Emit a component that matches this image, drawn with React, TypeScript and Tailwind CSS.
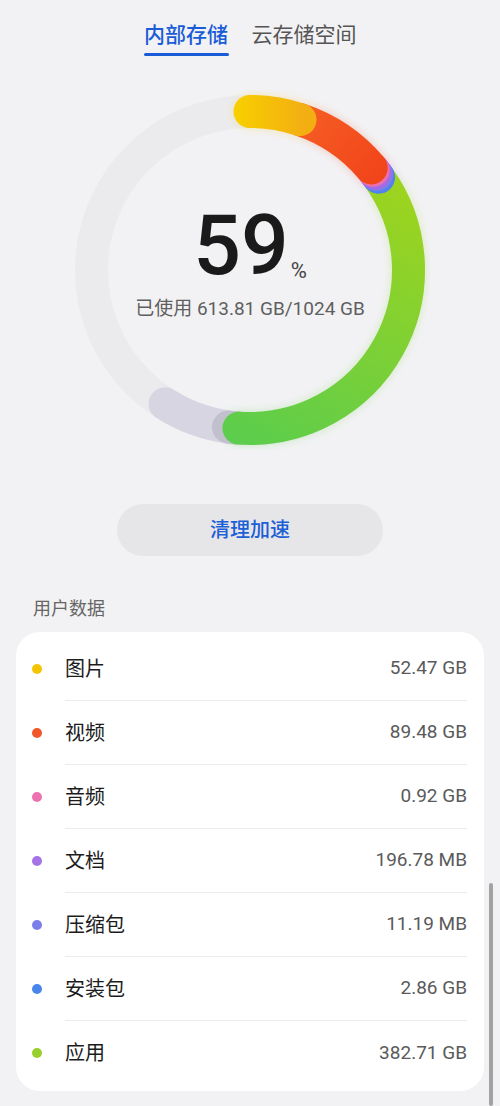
import React from 'react';

const CX = 180;
const CY = 180;
const R = 158.5;
const SW = 33;

// point on the ring, angle measured clockwise from 12 o'clock
const pt = (deg: number) => {
  const a = (deg * Math.PI) / 180;
  return [CX + R * Math.sin(a), CY - R * Math.cos(a)];
};

const arc = (from: number, to: number) => {
  const [x1, y1] = pt(from);
  const [x2, y2] = pt(to);
  const large = to - from > 180 ? 1 : 0;
  return `M ${x1.toFixed(2)} ${y1.toFixed(2)} A ${R} ${R} 0 ${large} 1 ${x2.toFixed(2)} ${y2.toFixed(2)}`;
};

// drawn bottom to top: later ones sit over the caps of earlier ones
const segments = [
  { from: 187.8, to: 212.4, stroke: '#d6d5e1', glow: false },
  { from: 184, to: 187.8, stroke: '#c1c0cd', glow: false },
  { from: 54.2, to: 184, stroke: 'url(#gGreen)', glow: true },
  { from: 53, to: 54.2, stroke: '#4f82ec', glow: true },
  { from: 52.2, to: 53, stroke: '#7b7de9', glow: true },
  { from: 51, to: 52.2, stroke: '#a46ae6', glow: true },
  { from: 49.9, to: 51, stroke: '#ec6fae', glow: true },
  { from: 18.4, to: 49.9, stroke: 'url(#gOrange)', glow: true },
  { from: 0, to: 18.4, stroke: 'url(#gYellow)', glow: true },
];

const rows = [
  { name: '图片', size: '52.47 GB', color: '#f5c400' },
  { name: '视频', size: '89.48 GB', color: '#f0582c' },
  { name: '音频', size: '0.92 GB', color: '#ee72b0' },
  { name: '文档', size: '196.78 MB', color: '#a673e6' },
  { name: '压缩包', size: '11.19 MB', color: '#7c7fe9' },
  { name: '安装包', size: '2.86 GB', color: '#4a86ea' },
  { name: '应用', size: '382.71 GB', color: '#98cf2c' },
];

const Donut: React.FC = () => (
  <svg width="360" height="360" viewBox="0 0 360 360">
    <defs>
      <linearGradient id="gYellow" gradientUnits="userSpaceOnUse" x1="165" y1="0" x2="235" y2="0">
        <stop offset="0" stopColor="#f8cf00" />
        <stop offset="1" stopColor="#f3ae12" />
      </linearGradient>
      <linearGradient id="gOrange" gradientUnits="userSpaceOnUse" x1="220" y1="30" x2="300" y2="100">
        <stop offset="0" stopColor="#f65e24" />
        <stop offset="1" stopColor="#f1441a" />
      </linearGradient>
      <linearGradient id="gGreen" gradientUnits="userSpaceOnUse" x1="330" y1="70" x2="170" y2="350">
        <stop offset="0" stopColor="#a2d41b" />
        <stop offset="1" stopColor="#5ccd4c" />
      </linearGradient>
      <filter id="blur" x="-20%" y="-20%" width="140%" height="140%">
        <feGaussianBlur stdDeviation="5" />
      </filter>
    </defs>
    <circle cx={CX} cy={CY} r={R} fill="none" stroke="#ebebee" strokeWidth={SW} />
    <g filter="url(#blur)" opacity="0.28">
      {segments
        .filter((s) => s.glow)
        .map((s, i) => (
          <path key={i} d={arc(s.from, s.to)} fill="none" stroke={s.stroke} strokeWidth={SW} strokeLinecap="round" />
        ))}
    </g>
    {segments.map((s, i) => (
      <path key={i} d={arc(s.from, s.to)} fill="none" stroke={s.stroke} strokeWidth={SW} strokeLinecap="round" />
    ))}
  </svg>
);

const App: React.FC = () => {
  return (
    <div
      className="relative min-h-[1106px] w-full bg-[#f2f2f4] pb-[14px]"
      style={{ fontFamily: 'Roboto, "Noto Sans CJK SC", sans-serif' }}
    >
      {/* tabs */}
      <div className="flex justify-center gap-[23px] pt-[21px]">
        <div className="flex flex-col items-center">
          <span className="text-[21px] leading-[28px] font-medium text-[#1a5cd7]">内部存储</span>
          <span className="mt-[4px] h-[3px] w-[85px] rounded-full bg-[#1a5cd7]" />
        </div>
        <span className="text-[21px] leading-[28px] text-[#555555]">云存储空间</span>
      </div>

      {/* ring */}
      <div className="relative mx-auto mt-[34px] h-[360px] w-[360px]">
        <Donut />
        <div className="absolute inset-0 flex flex-col items-center pt-[114px]">
          <div className="flex items-baseline">
            <span className="text-[84px] leading-none font-medium text-[#1a1a1a]">59</span>
            <span className="relative top-[4px] ml-[2px] text-[22px] leading-none text-[#444444]">%</span>
          </div>
          <span className="mt-[8px] text-[19px] leading-[26px] text-[#5f5f5f]">已使用 613.81 GB/1024 GB</span>
        </div>
      </div>

      {/* button */}
      <div className="mt-[54px] flex justify-center">
        <button className="h-[52px] w-[266px] rounded-full bg-[#e6e6e9] text-[20px] font-medium text-[#1d5fd6]">
          清理加速
        </button>
      </div>

      <div className="mt-[41px] px-[33px] text-[18px] leading-[24px] text-[#666666]">用户数据</div>

      {/* list */}
      <div className="mx-[16px] mt-[11px] rounded-[24px] bg-white pt-[5px] pb-[6px] pl-[16px] pr-[17px]">
        {rows.map((r, i) => (
          <div key={r.name} className="flex items-center">
            <span className="mr-[23px] h-[10px] w-[10px] shrink-0 rounded-full" style={{ backgroundColor: r.color }} />
            <div
              className={
                i === rows.length - 1
                  ? 'flex h-[64px] flex-1 items-center justify-between'
                  : 'flex h-[64px] flex-1 items-center justify-between border-b border-[#ebebeb]'
              }
            >
              <span className="text-[20px] text-[#1c1c1c]">{r.name}</span>
              <span className="text-[19px] text-[#5a5a5a]">{r.size}</span>
            </div>
          </div>
        ))}
      </div>

      {/* scroll indicator */}
      <div className="absolute top-[883px] right-[7px] h-[223px] w-[4px] rounded-full bg-[#a3a3a3]" />
    </div>
  );
};

export default App;
